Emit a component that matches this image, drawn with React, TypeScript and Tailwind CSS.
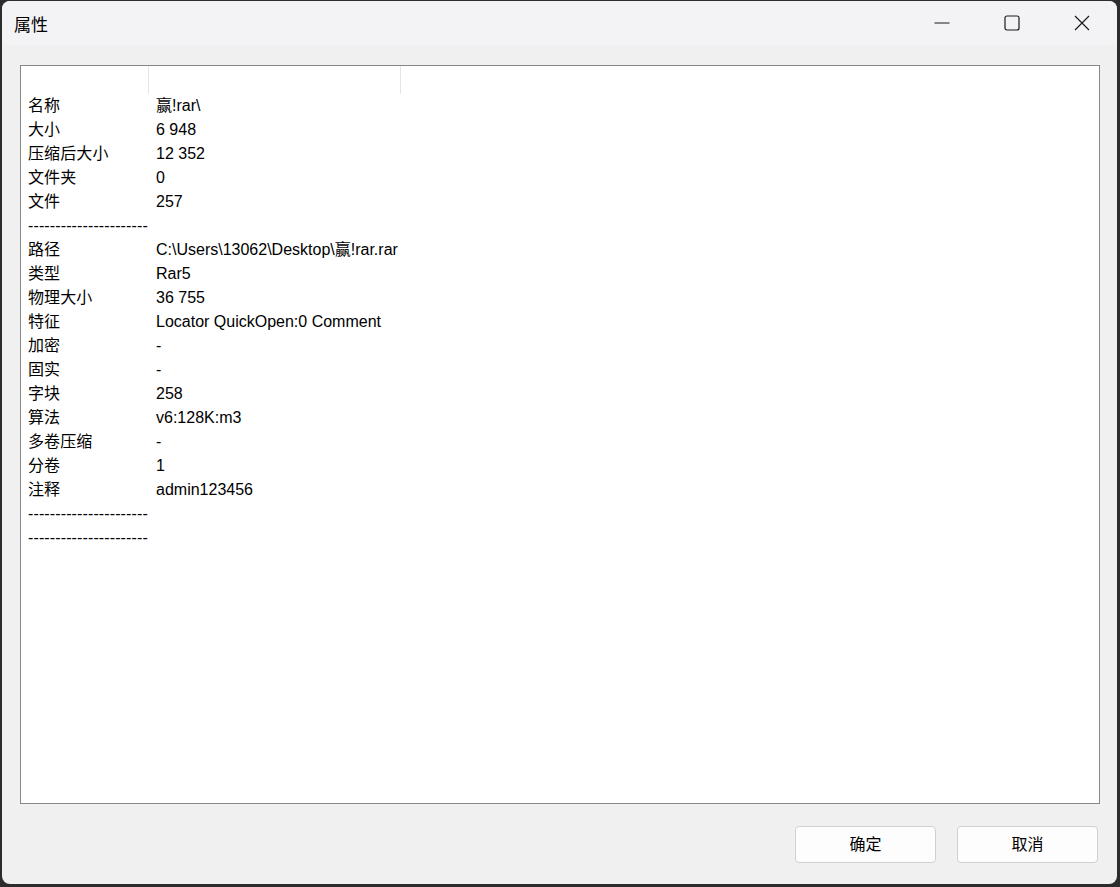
import React from "react";

const DASH = "----------------------";

const rows: [string, string][] = [
  ["名称", "赢!rar\\"],
  ["大小", "6 948"],
  ["压缩后大小", "12 352"],
  ["文件夹", "0"],
  ["文件", "257"],
  [DASH, ""],
  ["路径", "C:\\Users\\13062\\Desktop\\赢!rar.rar"],
  ["类型", "Rar5"],
  ["物理大小", "36 755"],
  ["特征", "Locator QuickOpen:0 Comment"],
  ["加密", "-"],
  ["固实", "-"],
  ["字块", "258"],
  ["算法", "v6:128K:m3"],
  ["多卷压缩", "-"],
  ["分卷", "1"],
  ["注释", "admin123456"],
  [DASH, ""],
  [DASH, ""],
];

export default function App() {
  return (
    <div
      className="w-[1120px] h-[887px] bg-[#2c2c2c] pl-[2px] pt-[1px] pr-[3px] pb-[3px] flex"
      style={{ fontFamily: '"Liberation Sans", "Noto Sans CJK SC", sans-serif' }}
    >
      <div className="flex-1 flex flex-col rounded-[8px] overflow-hidden bg-[#f0f0f0]">
        {/* Title bar */}
        <div className="h-[44px] bg-[#f3f3f5] flex items-center shrink-0">
          <div className="pl-[12px] text-[17px] text-black leading-none flex-1" style={{ fontFamily: '"Noto Sans CJK SC", sans-serif' }}>
            属性
          </div>
          <div className="flex items-center h-full">
            <div className="w-[70px] h-full flex items-center justify-center">
              <svg width="16" height="16" viewBox="0 0 16 16">
                <line x1="0.5" y1="8" x2="15.5" y2="8" stroke="#1a1a1a" strokeWidth="1.2" />
              </svg>
            </div>
            <div className="w-[70px] h-full flex items-center justify-center">
              <svg width="16" height="16" viewBox="0 0 16 16">
                <rect x="1" y="1" width="14" height="14" rx="2" fill="none" stroke="#1a1a1a" strokeWidth="1.2" />
              </svg>
            </div>
            <div className="w-[70px] h-full flex items-center justify-center">
              <svg width="16" height="16" viewBox="0 0 16 16">
                <path d="M1 1 L15 15 M15 1 L1 15" stroke="#1a1a1a" strokeWidth="1.2" fill="none" />
              </svg>
            </div>
          </div>
        </div>

        {/* Body */}
        <div className="flex-1 flex flex-col pt-[20px] pl-[18px] pr-[17px] pb-[21px]">
          <div className="flex-1 bg-white border border-[#878787] overflow-hidden">
            {/* header */}
            <div className="flex h-[28px]">
              <div className="w-[128px] border-r border-[#e5e5e5]" />
              <div className="w-[252px] border-r border-[#e5e5e5]" />
            </div>
            {rows.map(([k, v], i) => (
              <div key={i} className="flex h-[24px] text-[16px] leading-[24px] text-black">
                <div className="w-[128px] pl-[7px] whitespace-nowrap tracking-[0.12px]">{k}</div>
                <div className="pl-[7px] whitespace-nowrap">{v}</div>
              </div>
            ))}
          </div>
          <div className="flex justify-end gap-[21px] mt-[22px] pr-[2px]">
            <button className="w-[141px] h-[37px] rounded-[4px] border border-[#d0d0d0] bg-[#fdfdfd] text-[16px] text-black flex items-center justify-center">
              确定
            </button>
            <button className="w-[141px] h-[37px] rounded-[4px] border border-[#d0d0d0] bg-[#fdfdfd] text-[16px] text-black flex items-center justify-center">
              取消
            </button>
          </div>
        </div>
      </div>
    </div>
  );
}
